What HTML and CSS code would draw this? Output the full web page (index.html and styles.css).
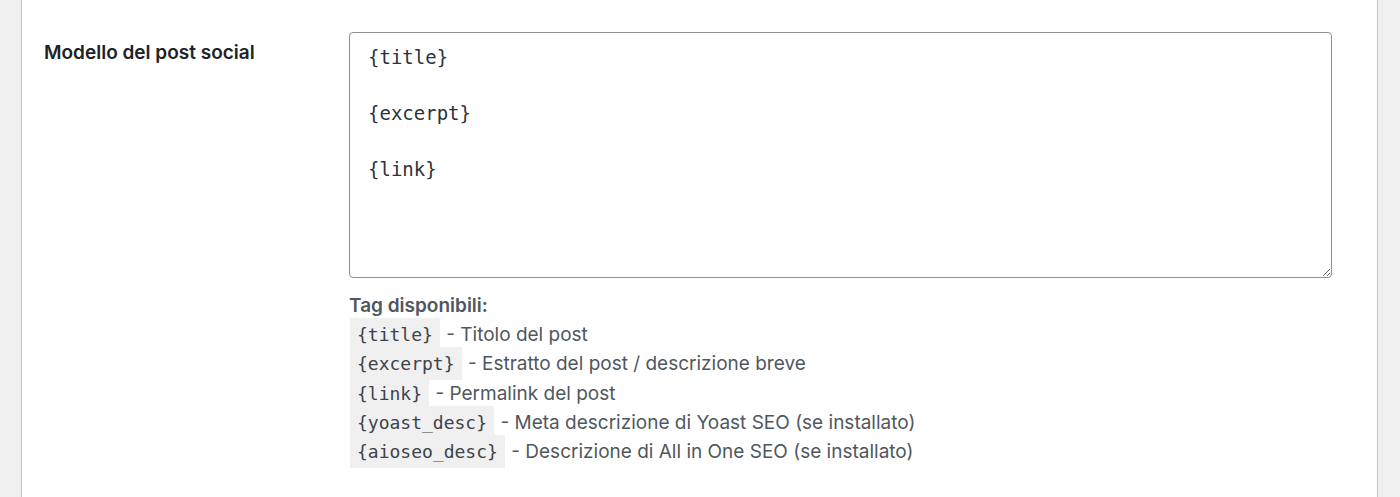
FILE: index.html
```html
<!DOCTYPE html>
<html>
<head>
	<title>Impostazioni social</title>
	<link rel="stylesheet" href="styles.css">
</head>
<body>
	<div class="panel">
		<div class="form-row">
			<label for="post_template" class="row-label">Modello del post social</label>
			<div class="row-field">
				<textarea id="post_template" class="template" rows="8">{title}

{excerpt}

{link}</textarea>
				<div class="description">
					<strong>Tag disponibili:</strong><br>
					<code>{title}</code> - Titolo del post<br>
					<code>{excerpt}</code> - Estratto del post / descrizione breve<br>
					<code>{link}</code> - Permalink del post<br>
					<code>{yoast_desc}</code> - Meta descrizione di Yoast SEO (se installato)<br>
					<code>{aioseo_desc}</code> - Descrizione di All in One SEO (se installato)
				</div>
			</div>
		</div>
	</div>
</body>
</html>
```

FILE: styles.css
```css
html, body {
	height: 100%;
}

body {
	margin: 0;
	padding: 0;
	background-color: #f0f0f1;
	font-family: Inter, "Liberation Sans", sans-serif;
	color: #1d2327;
}

.panel {
	margin: 0 22px 0 21px;
	height: 100%;
	box-sizing: border-box;
	background-color: #fff;
	border-left: 1px solid #c3c4c7;
	border-right: 1px solid #c3c4c7;
	padding: 32px 45px 0 22px;
}

.form-row {
	display: flex;
}

.row-label {
	width: 305px;
	flex-shrink: 0;
	padding-top: 9px;
	font-size: 19px;
	font-weight: 600;
	line-height: 1.3;
}

.row-field {
	flex: 1;
}

.template {
	display: block;
	width: 100%;
	height: 246px;
	box-sizing: border-box;
	margin: 0;
	padding: 10px 18px;
	border: 1px solid #8c8f94;
	border-radius: 4px;
	font-family: "DejaVu Sans Mono", monospace;
	font-size: 19px;
	line-height: 28px;
	color: #2c3338;
	background-color: #fff;
}

.description {
	margin-top: 13px;
	font-size: 19px;
	line-height: 29.2px;
	color: #50575e;
}

.description strong {
	font-weight: 600;
}

code {
	font-family: "DejaVu Sans Mono", monospace;
	font-size: 18px;
	line-height: 1;
	padding: 6px 7px 6px;
	margin: 0 1px;
	background-color: #f0f0f1;
	color: #3c434a;
}
```
